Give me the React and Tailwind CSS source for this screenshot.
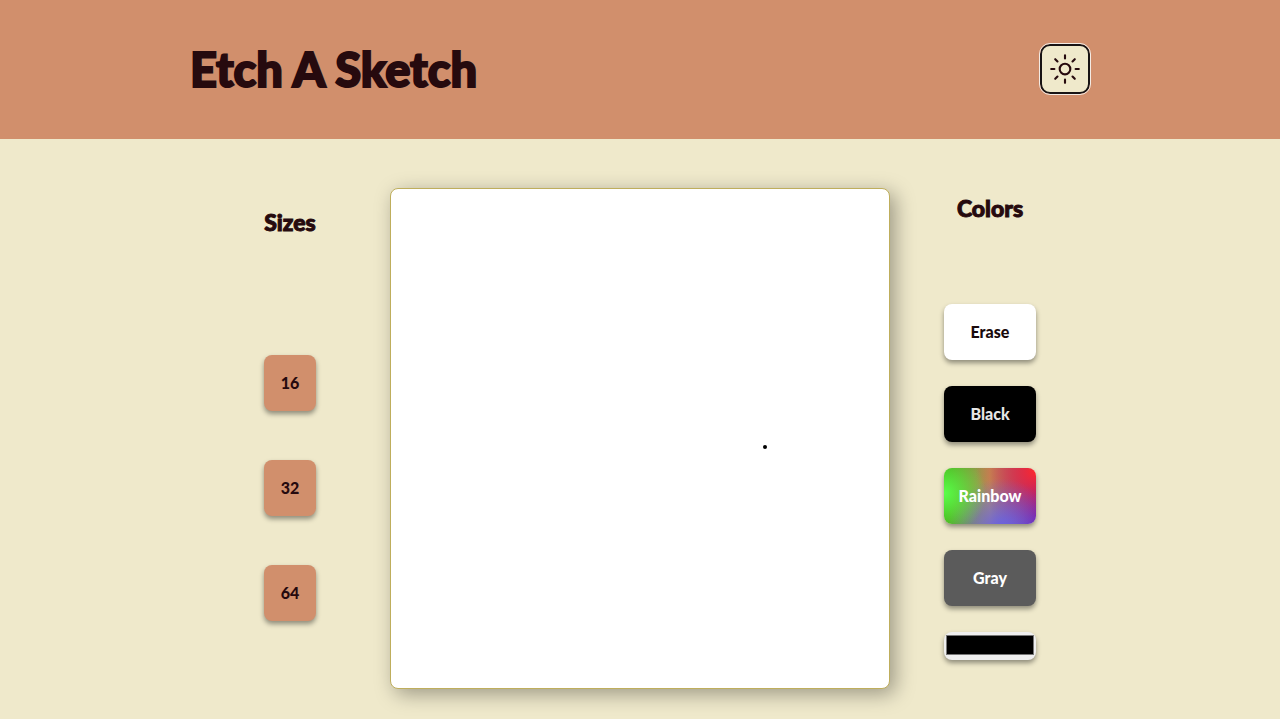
import { useState } from "react";
import { IoSunnyOutline } from "react-icons/io5";

const sizes = [16, 32, 64];

const inks = [
  { name: "Erase", look: "bg-white text-[#1a0a0c]" },
  { name: "Black", look: "bg-black text-[#e6e6e6]" },
  {
    name: "Rainbow",
    look: "text-white bg-[radial-gradient(circle_at_0%_45%,#5bff4a_0px,#5bff4a00_42px),radial-gradient(circle_at_62%_115%,#645fee_0px,#645fee00_54px),radial-gradient(circle_at_100%_5%,#ff2a2a_0px,#ff2a2a00_60px),linear-gradient(to_right,#3fa510_0%,#b4955c_50%,#5a14c0_100%)]",
  },
  { name: "Gray", look: "bg-[#5b5b5b] text-white" },
];

function Tile({ className, children, ...rest }) {
  return (
    <button
      type="button"
      className={`h-14 rounded-lg text-[16px] leading-6 font-black shadow-[0_3px_5px_rgba(0,0,0,0.4)] ${className}`}
      {...rest}
    >
      {children}
    </button>
  );
}

export default function App() {
  const [color, setColor] = useState("#000000");
  return (
    <div className="min-h-screen bg-[#efe9cb] font-['Lato',sans-serif] text-[#260a0e]">
      <header className="bg-[#d18f6c] pt-[42px] pb-11">
        <div className="mx-auto flex max-w-[900px] items-center justify-between">
          <h1 className="pt-0.5 text-[47px] leading-[51px] font-black [-webkit-text-stroke:2px_currentColor]">
            Etch A Sketch
          </h1>
          <button
            type="button"
            aria-label="Toggle theme"
            className="flex size-[50px] items-center justify-center rounded-[10px] border-2 border-[#181414] bg-[#efe9cb] outline outline-[#f4ebe4]"
          >
            <IoSunnyOutline className="size-[34px]" />
          </button>
        </div>
      </header>

      <main className="mx-auto grid max-w-[900px] grid-cols-[1fr_500px_1fr] pt-[49px] pb-[30px]">
        <section className="flex flex-col items-center pt-[18px]">
          <h2 className="text-[23px] leading-8 font-black [-webkit-text-stroke:1px_currentColor]">Sizes</h2>
          <div className="mt-[117px] flex flex-col gap-[49px]">
            {sizes.map((n) => (
              <Tile key={n} className="w-[52px] bg-[#d18f6c]">
                {n}
              </Tile>
            ))}
          </div>
        </section>

        <div className="relative h-[501px] rounded-lg border border-[#bfae5c] bg-white shadow-[5px_5px_20px_rgba(0,0,0,0.35)]">
          <span className="absolute top-[256px] left-[372px] size-1 rounded-full bg-black" />
        </div>

        <section className="flex flex-col items-center pt-1">
          <h2 className="text-[23px] leading-8 font-black [-webkit-text-stroke:1px_currentColor]">Colors</h2>
          <div className="mt-20 flex w-[92px] flex-col gap-[26px]">
            {inks.map((ink) => (
              <Tile key={ink.name} className={ink.look}>
                {ink.name}
              </Tile>
            ))}
            <input
              type="color"
              aria-label="Custom color"
              value={color}
              onChange={(e) => setColor(e.target.value)}
              className="h-7 w-full rounded-lg bg-[#efefef] px-0.5 pt-[3px] pb-[5px] shadow-[0_3px_5px_rgba(0,0,0,0.4)] [&::-webkit-color-swatch]:border [&::-webkit-color-swatch]:border-[#777] [&::-webkit-color-swatch-wrapper]:p-0"
            />
          </div>
        </section>
      </main>
    </div>
  );
}
